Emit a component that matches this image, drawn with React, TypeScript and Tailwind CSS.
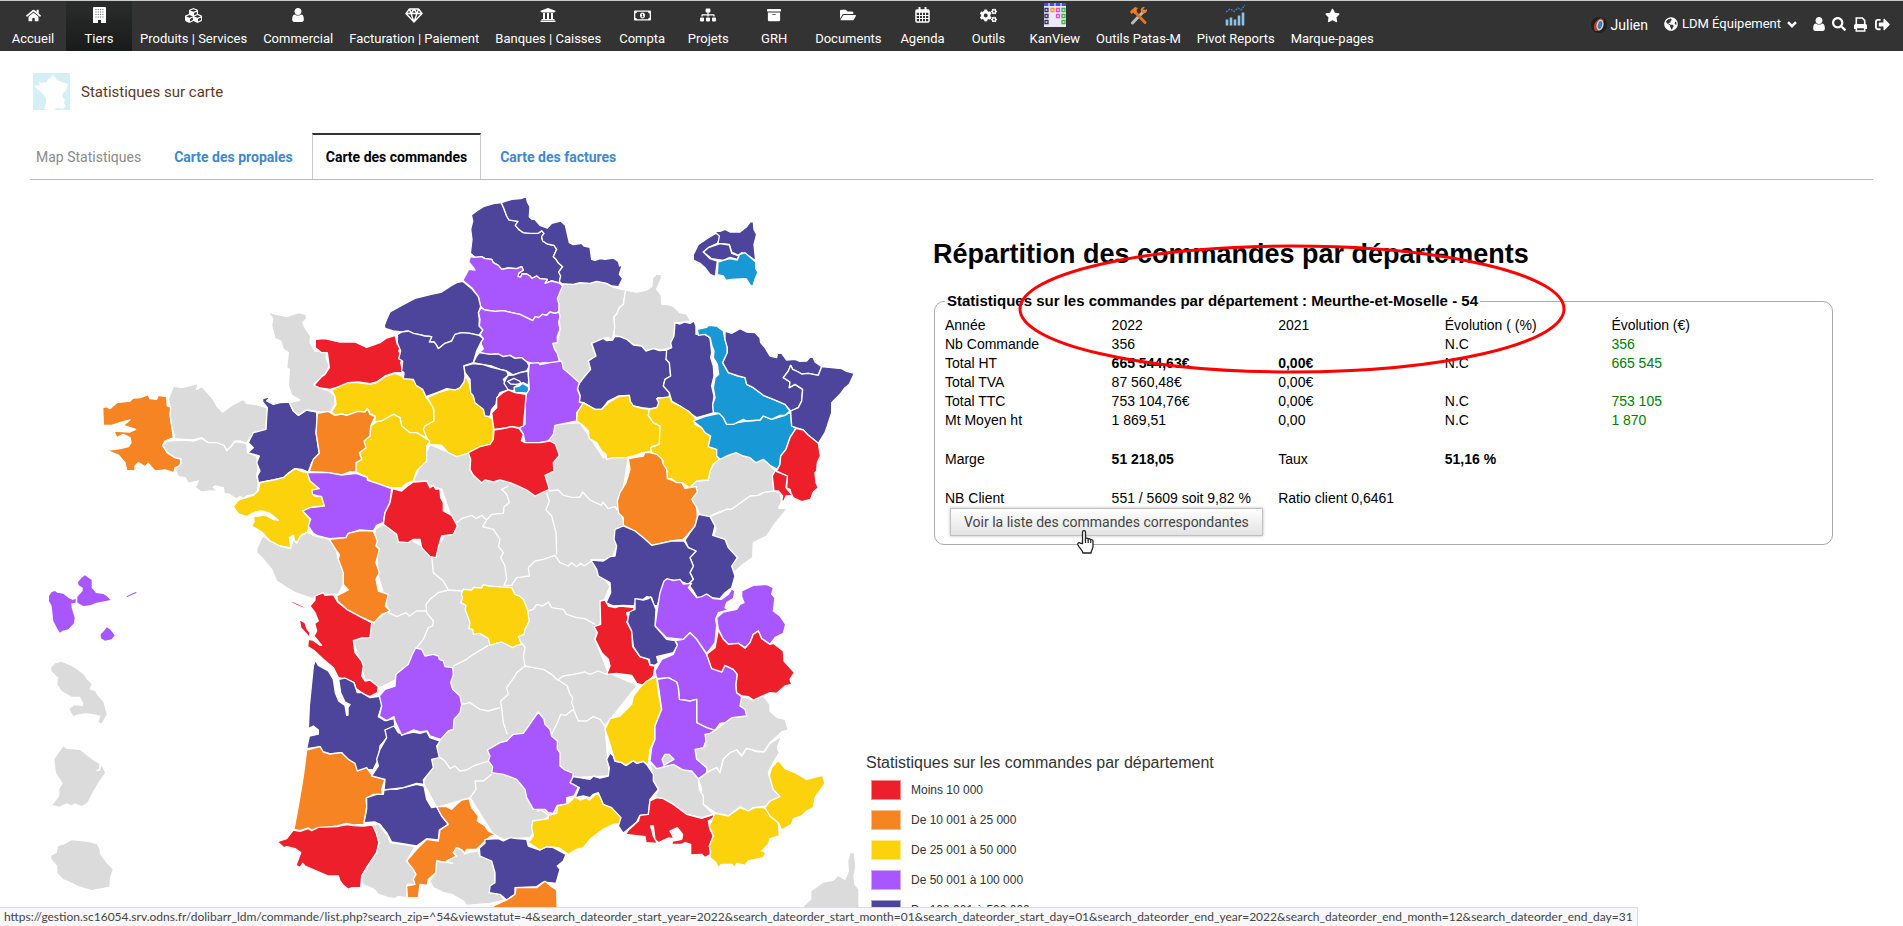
import type { ReactNode } from "react";
import clsx from "clsx";
import {
  FaArchive,
  FaCogs,
  FaCubes,
  FaFolderOpen,
  FaGlobeAmericas,
  FaHome,
  FaRegMoneyBillAlt,
  FaSearch,
  FaSignOutAlt,
  FaSitemap,
  FaStar,
  FaUniversity,
} from "react-icons/fa";

const RED = "#ed1f2b";
const ORANGE = "#f68422";
const YELLOW = "#fcd20c";
const PURPLE = "#a857ff";
const NAVY = "#4c459b";
const BLUE = "#1998d6";
const GRAY = "#dbdbdb";

function BuildingIcon() {
  return (
    <svg width="13" height="16" viewBox="0 0 13 16">
      <path d="M0 1q0-1 1-1h11q1 0 1 1v15H0z" fill="#fff" />
      <path d="M2.500 2.500h8M2.500 5h8M2.500 7.500h8M2.500 10h8" stroke="#555" strokeWidth="1" strokeDasharray="1 1.300" />
      <path d="M5 13h3v3H5z" fill="#222" />
    </svg>
  );
}

function UserIcon({ className }: { className?: string }) {
  return (
    <svg className={className} width="12" height="14" viewBox="0 128 1280 1536" fill="currentColor">
      <path d="M1280 1399q0 109-62.500 187t-150.500 78H213q-88 0-150.500-78T0 1399q0-85 8.500-160.500t31.500-152 58.500-131 94-89T327 832q131 128 313 128t313-128q76 0 134.500 34.500t94 89 58.500 131 31.500 152 8.500 160.500zm-256-887q0 159-112.500 271.500T640 896 368.500 783.500 256 512t112.500-271.500T640 128t271.500 112.500T1024 512z" />
    </svg>
  );
}

function DiamondIcon() {
  return (
    <svg width="18" height="15" viewBox="0 0 18 15" fill="none" stroke="#fff" strokeWidth="1.400" strokeLinejoin="round">
      <path d="M4.500 1h9L17 5.500 9 14 1 5.500zM1 5.500h16M6 5.500 9 14l3-8.500M4.500 1 6 5.500 9 1l3 4.500L13.500 1" />
    </svg>
  );
}

function CalendarIcon() {
  return (
    <svg width="15" height="16" viewBox="0 0 15 16" fill="none" stroke="#fff">
      <rect x="1" y="3" width="13" height="12" rx="1" strokeWidth="1.500" />
      <path d="M1 4.500h13" strokeWidth="2.500" />
      <path d="M4.500 0v4M10.500 0v4" strokeWidth="2" />
      <path d="M1 8.500h13M1 11.500h13M4.500 5v10M7.500 5v10M10.500 5v10" strokeWidth="1" />
    </svg>
  );
}

function PrintIcon() {
  return (
    <svg width="15" height="15" viewBox="0 0 15 15" fill="none" stroke="#fff" strokeWidth="1.600">
      <path d="M3.300 8V1h6l2.400 2.400V8" />
      <path d="M1 12V8.500Q1 7 2.500 7h10Q14 7 14 8.500V12z" fill="#fff" stroke="none" />
      <path d="M3.300 10.500h8.400V14H3.300z" fill="#333" />
    </svg>
  );
}

function KanViewIcon() {
  return (
    <svg width="22" height="24" viewBox="0 0 22 24">
      <rect width="22" height="24" fill="#ece9f4" />
      <path d="M0 0h22v3H0z" fill="#4a4ae0" />
      <path d="M5 0v3M11 0v3M17 0v3" stroke="#fff" strokeWidth="1" />
      <g fill="none" strokeWidth="1.300">
        <path d="M1 5.500h3v3H1zM1 11.500h3v3H1zM1 17.500h3v3H1z" stroke="#333366" />
        <path d="M7 5.500h3v3H7z" stroke="#ef9b3a" />
        <path d="M12.500 5.500h3v3h-3zM12.500 11.500h3v3h-3z" stroke="#e354c4" />
        <path d="M18 5.500h3v3h-3zM18 11.500h3v3h-3zM18 17.500h3v3h-3z" stroke="#3fb54a" />
      </g>
    </svg>
  );
}

function ToolsIcon() {
  return (
    <svg width="19" height="19" viewBox="0 0 19 19" fill="none">
      <path d="M15 5 3.500 17" stroke="#b9bcc0" strokeWidth="3" strokeLinecap="round" />
      <path d="M6 6l10 10.500" stroke="#e2731f" strokeWidth="3" strokeLinecap="round" />
      <path d="M1 5.500 6 1l3 1-1.500 2L8 6 5.500 8 4.500 6.500 2.500 8z" fill="#ef7d22" />
      <path d="M12 5.500c-1-3 1-5 4-4.500l-2 2.300 1.500 1.500L18 3c.6 3-1.500 5-4.500 4.200z" fill="#ef7d22" />
    </svg>
  );
}

function PivotIcon() {
  return (
    <svg width="22" height="22" viewBox="0 0 22 22">
      <path d="M2 21.500v-6M6 21.500v-8M10 21.500v-6M14 21.500v-10M18 21.500v-13" stroke="#8cc3ea" strokeWidth="2.600" />
      <path d="M1 8l4-3 4 2.500L13 4l3 2 4-5" stroke="#3f86c9" strokeWidth="1.200" strokeDasharray="2 1" fill="none" />
    </svg>
  );
}

type MenuItem = { label: string; icon: ReactNode; active?: boolean };

const menu: MenuItem[] = [
  { label: "Accueil", icon: <FaHome size={15} /> },
  { label: "Tiers", icon: <BuildingIcon />, active: true },
  { label: "Produits | Services", icon: <FaCubes size={17} /> },
  { label: "Commercial", icon: <UserIcon /> },
  { label: "Facturation | Paiement", icon: <DiamondIcon /> },
  { label: "Banques | Caisses", icon: <FaUniversity size={16} /> },
  { label: "Compta", icon: <FaRegMoneyBillAlt size={17} /> },
  { label: "Projets", icon: <FaSitemap size={16} /> },
  { label: "GRH", icon: <FaArchive size={14} /> },
  { label: "Documents", icon: <FaFolderOpen size={16} /> },
  { label: "Agenda", icon: <CalendarIcon /> },
  { label: "Outils", icon: <FaCogs size={17} /> },
  { label: "KanView", icon: <KanViewIcon /> },
  { label: "Outils Patas-M", icon: <ToolsIcon /> },
  { label: "Pivot Reports", icon: <PivotIcon /> },
  { label: "Marque-pages", icon: <FaStar size={15} /> },
];

function TopMenu() {
  return (
    <header className="flex h-[51px] items-stretch justify-between border-t border-[#c8cdc8] bg-[#333] text-white">
      <nav className="flex">
        {menu.map((item) => (
          <a
            key={item.label}
            href="#"
            className={clsx(
              "flex min-w-[66px] flex-col items-center px-2 text-[13px] leading-5 whitespace-nowrap",
              item.active && "bg-linear-to-b from-[#2b2d2d] to-[#191b1b]"
            )}
          >
            <span className="flex h-7 items-center">{item.icon}</span>
            {item.label}
          </a>
        ))}
      </nav>
      <div className="flex items-center pr-[13px] pb-[2px] text-[13px]">
        <svg width="16" height="16" viewBox="0 0 16 16" className="mr-1">
          <circle cx="8" cy="8" r="8" fill="#221d20" />
          <path d="M4 14C1 9 4 3 10 1l3 2-5 11z" fill="#a8412d" />
          <ellipse cx="9" cy="8" rx="3.500" ry="5.500" fill="#d9cfc6" transform="rotate(15 9 8)" />
          <ellipse cx="9" cy="8" rx="2" ry="4" fill="#3d7fb5" transform="rotate(15 9 8)" />
        </svg>
        <a href="#" className="mr-4 text-sm">Julien</a>
        <button type="button" className="mr-4 flex items-center pb-[2px]">
          <FaGlobeAmericas size={14} className="mr-1" />
          LDM Équipement
          <svg className="ml-[6px]" width="10" height="7" viewBox="0 0 10 7" fill="none">
            <path d="M1 1.200 5 5.200l4-4" stroke="#fff" strokeWidth="2.400" />
          </svg>
        </button>
        <div className="flex items-center gap-[7px] pb-[2px]">
          <button type="button" aria-label="Utilisateur"><UserIcon /></button>
          <button type="button" aria-label="Rechercher"><FaSearch size={14} /></button>
          <button type="button" aria-label="Imprimer"><PrintIcon /></button>
          <button type="button" aria-label="Déconnexion"><FaSignOutAlt size={15} /></button>
        </div>
      </div>
    </header>
  );
}

const tabs = ["Carte des propales", "Carte des commandes", "Carte des factures"];

function Tabs() {
  return (
    <nav className="flex h-[47px] items-stretch border-b border-[#bbb] text-sm">
      <span className="flex items-center pl-[6px] pr-[14px] pt-[2px] text-[#8a8a8a]">Map Statistiques</span>
      {tabs.map((tab) => {
        const active = tab === "Carte des commandes";
        return (
          <a
            key={tab}
            href="#"
            className={clsx(
              "flex items-center font-bold whitespace-nowrap",
              active
                ? "border-x border-t-2 border-x-[#ccc] border-t-[#333] px-[13px] text-black"
                : "px-[19px] pt-[2px] text-[#4089cc]"
            )}
          >
            {tab}
          </a>
        );
      })}
    </nav>
  );
}

type Zone = [fill: string, d: string];

// Every sheet has its own origin, zones are drawn in the order of the list
const north: Zone[] = [
  [GRAY, "M605 315 640 315 660 310 690 312 710 306 740 312 755 322 776 328 797 332 790 375 778 385 770 405 762 412 764 445 758 480 740 474 730 477 695 492 708 530 685 545 692 570 675 590 658 612 635 592 610 568 598 545 584 510 578 492 592 490 600 450 596 398 592 358Z"],
  [GRAY, "M797 332 830 338 860 332 875 322 878 295 890 284 904 286 904 296 890 330 904 348 905 375 925 376 940 380 960 400 980 404 992 425 960 430 945 430 942 470 935 505 905 512 880 508 858 515 845 500 820 497 800 480 780 472 762 470 764 445 762 412 770 405 778 385 790 375Z"],
  [NAVY, "M424 70 400 73 370 82 350 95 334 107 338 125 332 150 336 180 331 222 345 234 365 232 375 238 395 240 400 250 415 258 425 270 445 266 470 268 485 262 490 272 476 282 474 292 482 293 486 284 500 284 510 290 516 297 530 290 540 298 562 300 555 312 575 305 598 311 602 290 596 278 608 262 596 252 588 240 580 232 590 210 582 198 562 194 548 185 545 172 552 162 545 154 535 162 510 162 490 160 476 150 466 138 474 126 460 124 447 122 440 110 432 88Z"],
  [NAVY, "M424 70 455 60 482 58 499 52 502 68 510 82 508 112 516 120 524 120 540 138 562 146 575 132 602 125 616 138 620 155 628 190 640 196 665 192 672 200 690 204 695 240 705 243 720 238 735 240 760 236 775 246 779 260 787 256 778 285 788 298 776 322 755 320 740 312 710 306 690 312 660 310 640 315 605 313 598 306 602 290 596 278 608 262 596 252 588 240 580 232 590 210 582 198 562 194 548 185 545 172 552 162 545 154 535 162 510 162 490 160 476 150 466 138 474 126 460 124 447 122 440 110 432 88Z"],
  [PURPLE, "M331 232 345 234 365 232 375 238 395 240 400 250 415 258 425 270 445 266 470 268 485 262 490 272 476 282 474 292 482 293 486 284 500 284 510 290 516 297 530 290 540 298 562 300 555 312 575 305 598 311 608 320 600 338 592 358 597 375 596 398 585 402 570 398 560 408 548 405 535 415 526 412 518 424 500 415 480 405 455 400 430 394 405 396 375 392 362 382 355 352 335 325 308 303 318 285 326 270 345 272 340 264 326 248Z"],
  [PURPLE, "M362 386 375 392 405 396 430 394 455 400 480 405 500 415 518 424 526 412 535 415 548 405 560 408 570 398 585 402 596 398 600 410 596 430 600 450 592 470 592 490 578 492 584 510 592 522 598 545 575 552 550 550 525 555 500 547 485 535 465 537 450 528 430 532 415 524 390 525 358 520 370 508 362 490 370 478 360 465 368 452 358 440 360 420 355 400Z"],
  [NAVY, "M308 306 335 328 355 352 362 382 355 400 358 420 357 440 368 452 357 468 330 462 305 460 285 465 275 485 255 492 235 508 228 495 222 488 208 488 215 472 195 470 175 465 160 462 145 455 125 458 100 455 75 447 73 438 80 420 90 398 125 378 165 357 210 346 245 338 275 318 290 310Z"],
  [NAVY, "M112 466 125 458 145 455 160 462 175 465 195 470 215 472 208 488 222 488 228 495 235 508 255 492 275 485 285 465 305 460 330 462 357 468 370 478 362 490 350 515 340 550 312 560 315 590 312 608 300 625 285 632 260 628 235 638 198 652 188 630 168 618 160 600 130 598 132 580 125 575 128 545 116 538 122 515 112 490Z"],
  [NAVY, "M358 520 390 525 415 524 430 532 450 528 465 537 485 535 500 547 508 560 500 575 480 580 460 587 440 575 420 570 395 560 370 556 340 550 350 530Z"],
  [NAVY, "M312 560 340 553 370 556 395 564 420 570 440 575 445 588 430 600 440 620 445 632 420 640 410 660 408 675 395 690 390 712 375 710 370 690 345 670 340 650 332 640 330 600 315 580Z"],
  [NAVY, "M445 588 460 587 480 580 504 575 506 600 505 618 490 610 465 622 462 635 445 632 432 612 438 598Z"],
  [NAVY, "M443 606 462 597 478 605 484 612 468 615 452 614Z"],
  [BLUE, "M462 624 478 620 488 612 505 622 507 642 485 640 465 640Z"],
  [NAVY, "M695 492 730 477 740 484 758 482 764 472 780 472 800 480 820 497 845 500 858 515 880 508 898 514 920 512 924 525 918 540 928 550 932 590 915 600 910 620 928 640 928 655 893 655 902 668 892 685 870 688 845 685 820 680 810 665 808 648 775 650 745 665 725 690 705 690 690 682 670 670 658 668 660 648 652 625 658 612 675 590 692 570 685 545 708 530Z"],
  [NAVY, "M945 430 960 434 975 428 990 432 1002 425 1008 440 1008 465 1030 462 1050 475 1055 520 1052 535 1060 560 1062 590 1055 620 1062 650 1058 680 1062 700 1035 708 1010 715 980 695 960 680 935 665 928 640 910 620 915 600 932 590 928 550 918 540 920 512 935 505 932 490 942 470Z"],
  [NAVY, "M1067 162 1050 172 1035 182 1015 195 1000 225 1000 242 1020 252 1035 265 1050 285 1066 292 1072 245 1050 238 1030 218 1045 205 1072 192 1080 178 1078 165Z"],
  [NAVY, "M1062 155 1080 156 1095 150 1110 158 1140 158 1160 142 1170 128 1180 127 1182 150 1190 165 1182 195 1187 245 1170 232 1145 220 1135 228 1115 218 1108 195 1074 192 1078 170Z"],
  [NAVY, "M1030 218 1045 205 1080 193 1108 197 1115 222 1136 230 1132 240 1110 234 1090 243 1055 238Z"],
  [BLUE, "M1074 248 1090 243 1110 238 1132 242 1138 226 1155 220 1187 248 1187 268 1194 278 1185 300 1178 322 1170 316 1158 298 1115 300 1098 303 1090 290 1072 286Z"],
];

const west: Zone[] = [
  [ORANGE, "M68 355 80 352 90 358 110 340 150 335 160 326 180 325 205 316 210 328 230 330 235 318 260 322 262 350 275 355 270 375 275 410 280 445 255 455 248 468 262 490 285 505 303 510 300 530 285 535 282 550 255 542 225 545 205 522 195 532 175 520 165 530 165 545 140 543 135 520 115 497 80 483 120 478 145 472 153 460 150 445 130 435 110 445 102 425 150 428 167 420 130 408 150 392 120 400 95 408 70 408Z"],
  [GRAY, "M265 330 280 290 305 295 325 290 355 282 350 300 366 292 375 302 400 330 412 352 428 368 460 345 490 330 500 342 530 346 562 355 560 385 558 420 530 430 510 445 500 462 480 455 465 455 450 475 440 482 432 468 400 460 385 460 365 445 340 452 310 450 285 448 275 410 270 375 272 355Z"],
  [GRAY, "M248 468 262 455 310 452 340 455 365 447 385 460 410 460 432 468 440 484 455 470 465 457 500 462 503 490 530 500 535 530 530 560 535 580 532 615 500 620 492 628 480 622 470 630 448 615 432 612 430 595 405 590 400 594 412 606 390 605 365 608 345 595 355 575 325 582 316 566 295 562 285 540 303 525 303 508 285 505 262 490Z"],
  [NAVY, "M548 328 572 322 560 335 580 345 600 340 628 338 640 365 655 378 680 362 710 368 712 400 708 430 718 492 695 520 685 548 665 540 645 538 625 552 610 565 580 572 535 580 532 560 540 545 530 520 538 500 503 490 520 475 505 460 520 430 558 420 560 385 562 355 548 338Z"],
  [GRAY, "M562 65 580 73 620 82 655 70 678 75 680 88 668 100 678 120 692 140 690 160 705 185 740 188 738 205 748 230 735 255 702 285 715 295 750 305 765 322 765 345 750 370 720 368 680 362 655 378 640 365 628 340 660 332 635 318 625 290 628 240 620 235 625 190 610 180 602 155 585 148 575 110 578 88Z"],
  [RED, "M706 150 735 148 780 158 825 158 860 174 900 160 920 146 945 138 952 165 962 175 956 185 968 205 962 220 970 250 945 250 915 260 890 278 870 283 835 278 805 280 790 288 750 300 720 296 702 288 725 262 735 255 748 235 742 190 725 190 706 175Z"],
  [YELLOW, "M755 302 790 286 805 280 835 280 870 285 890 280 915 262 945 252 970 262 1000 272 1010 285 1030 295 1038 325 1060 350 1062 395 1035 410 1038 445 1010 430 990 430 965 410 960 385 940 375 905 395 885 397 885 380 870 372 862 358 855 368 835 366 800 378 785 374 765 378 755 368 768 345 765 322Z"],
  [YELLOW, "M1042 325 1080 308 1115 298 1135 298 1142 275 1152 270 1158 260 1168 285 1175 315 1195 345 1215 360 1216 375 1240 390 1240 450 1235 470 1210 478 1170 490 1150 496 1130 502 1105 490 1085 468 1050 465 1038 440 1030 420 1035 410 1062 395 1062 360Z"],
  [YELLOW, "M890 397 905 395 940 375 960 385 965 410 990 430 1010 430 1050 455 1040 470 1040 515 1010 545 1000 575 980 582 965 595 930 595 900 585 885 582 862 572 862 564 828 548 828 520 845 510 838 490 855 475 850 455 870 440 872 410Z"],
  [ORANGE, "M712 372 745 366 765 378 785 374 800 378 835 366 855 368 862 358 870 375 885 382 872 410 870 440 852 455 858 475 838 490 845 510 828 520 828 548 810 548 785 557 745 550 688 546 700 510 718 492 708 430Z"],
  [YELLOW, "M540 580 580 572 610 565 625 552 645 538 665 546 682 550 690 575 718 598 698 610 705 620 725 622 733 650 690 655 668 665 690 690 690 710 683 725 702 736 680 730 664 736 655 758 644 756 640 738 628 745 632 776 600 770 570 755 545 728 515 710 522 698 520 682 555 677 580 690 595 693 570 672 545 665 525 668 500 682 475 674 460 652 475 632 520 618 535 604Z"],
  [PURPLE, "M682 550 745 550 785 557 828 552 862 564 862 572 900 585 935 598 930 640 915 670 910 700 890 708 880 725 840 722 805 732 798 745 748 748 715 740 700 732 685 710 692 690 668 665 690 655 733 650 725 622 698 616 696 602 718 598 690 575Z"],
  [RED, "M938 598 965 605 985 588 1000 578 1040 575 1050 595 1060 588 1068 600 1080 598 1082 625 1090 640 1090 665 1115 678 1132 710 1120 735 1085 740 1076 770 1068 805 1050 802 1025 775 1020 750 1000 750 985 760 955 758 950 735 910 705 915 670 930 640Z"],
  [GRAY, "M548 740 570 755 600 770 632 778 640 750 650 762 660 742 683 728 700 738 748 750 770 785 775 810 790 850 790 885 775 915 720 915 700 928 680 922 645 910 620 895 590 875 575 840 550 810 530 790 530 778Z"],
  [ORANGE, "M748 750 798 745 805 732 840 724 880 725 892 755 888 770 898 780 888 820 898 850 888 870 895 905 925 915 916 950 930 965 905 975 882 1000 840 982 800 960 773 935 770 920 805 902 790 885 790 850 775 810 778 796 770 785Z"],
];

const east: Zone[] = [
  [GRAY, "M715 450 740 440 768 430 790 440 810 445 828 460 850 450 870 468 885 485 877 500 882 545 850 550 835 558 810 560 780 582 755 600 740 600 700 615 690 622 660 618 650 595 635 570 652 548 648 532 628 537 650 515 685 512 690 485 700 465Z"],
  [GRAY, "M690 622 740 600 755 600 780 582 810 560 835 558 850 550 882 545 900 550 905 575 896 596 922 598 895 630 880 650 860 680 820 700 818 745 790 765 755 795 750 770 772 745 745 715 735 690 700 680 708 660 700 640Z"],
  [PURPLE, "M148 162 175 160 180 166 210 160 245 155 250 178 270 195 298 220 292 240 300 260 298 278 312 282 290 310 290 335 265 340 225 348 220 375 205 395 180 400 135 400 130 375 118 355 135 345 135 300 138 255 148 240 145 195Z"],
  [RED, "M50 265 68 250 85 242 105 250 138 255 135 300 130 350 118 355 95 352 78 356 42 360 38 335 35 310 50 295Z"],
  [RED, "M42 362 78 356 95 352 118 358 130 375 124 394 135 400 180 400 210 395 226 404 238 438 220 460 222 485 195 498 208 540 190 548 165 560 140 542 115 530 90 520 60 512 40 518 15 512 5 520 -20 498 -30 480 -28 450 -35 430 0 412 30 405 40 390Z"],
  [YELLOW, "M310 280 345 300 365 300 385 280 415 262 448 258 450 275 460 290 490 298 508 300 505 318 520 340 540 350 540 380 538 405 515 412 520 425 490 430 460 440 440 445 400 445 380 450 378 435 365 425 350 400 328 388 325 365 305 345 290 335 292 310Z"],
  [YELLOW, "M530 268 555 264 570 262 575 278 600 290 625 305 645 325 645 345 665 355 675 370 692 380 685 412 710 420 718 450 700 465 690 485 685 512 650 515 628 535 605 520 590 520 575 508 562 508 560 480 545 465 550 455 530 435 515 430 512 415 538 405 540 350 520 340 505 318 508 300 530 295 536 280Z"],
  [ORANGE, "M445 448 490 440 495 430 510 430 530 435 545 448 550 465 560 480 562 508 575 512 590 520 605 520 615 537 648 532 652 548 635 570 650 595 652 620 645 650 620 680 610 690 575 695 515 708 490 685 465 665 430 648 430 625 415 610 412 575 420 550 438 520 450 480Z"],
  [NAVY, "M655 615 690 622 705 650 698 678 735 690 745 715 772 745 755 770 765 800 755 835 735 850 720 868 695 865 680 855 655 870 640 845 625 825 640 810 630 790 640 770 630 745 648 725 625 715 615 692 630 670 645 650Z"],
  [NAVY, "M405 660 430 650 465 665 490 685 515 708 575 695 612 695 625 715 648 725 630 745 640 770 630 790 640 810 625 825 600 815 560 810 548 835 532 890 522 888 515 865 500 862 490 870 470 870 462 890 430 888 400 890 378 880 392 850 390 820 355 800 350 780 333 752 370 755 390 742 405 740 410 710 402 690Z"],
  [BLUE, "M640 335 680 320 718 312 730 325 740 345 800 335 840 332 850 320 875 330 915 318 932 308 935 350 948 357 930 385 918 420 902 440 900 465 892 480 870 468 850 450 828 460 810 445 790 440 768 430 740 440 720 450 710 440 710 420 685 412 692 380 675 370 665 355Z"],
  [BLUE, "M652 60 680 54 685 48 710 50 730 65 735 90 742 115 742 130 735 145 728 160 745 190 775 200 795 205 800 225 820 235 850 258 880 270 915 285 930 305 915 318 900 318 875 330 850 320 840 332 800 335 790 330 760 345 740 345 730 325 718 312 700 310 698 285 705 265 700 235 705 205 716 195 712 165 700 145 702 125 696 110 690 85 675 75 655 78Z"],
  [NAVY, "M735 65 755 72 780 58 800 68 825 70 840 85 842 100 855 115 870 140 890 145 892 132 905 132 920 152 945 150 960 156 980 155 990 143 1000 145 1005 158 1025 172 1015 198 985 192 965 194 955 188 938 180 932 168 925 185 910 205 930 218 928 235 945 225 968 240 965 275 955 295 932 305 915 285 880 270 850 258 820 235 800 225 795 205 775 200 745 190 728 160 742 130 742 115 735 90Z"],
  [NAVY, "M1025 172 1055 175 1085 178 1100 186 1123 192 1108 225 1095 235 1080 255 1055 280 1055 310 1042 350 1035 370 1015 402 985 378 970 362 948 355 935 350 932 305 955 295 965 275 968 240 945 225 928 235 930 218 910 205 925 185 932 168 938 180 955 188 965 194 985 192 1015 198Z"],
  [RED, "M948 357 970 362 985 378 1015 402 1021 440 1012 460 1010 485 1005 490 1008 520 1015 535 1000 548 992 570 965 577 945 568 935 560 930 540 920 536 922 500 890 485 900 465 902 440 918 420 930 385Z"],
  [RED, "M885 485 922 500 918 535 937 558 918 560 912 575 905 575 908 560 895 545 882 545 877 500Z"],
];

const southWest: Zone[] = [
  [YELLOW, "M580 90 605 92 612 84 635 86 640 76 655 80 680 82 725 85 735 105 748 110 760 120 772 150 778 185 765 210 762 225 745 232 755 255 740 258 728 265 710 256 695 248 678 252 660 258 655 238 630 222 610 225 608 210 597 208 600 190 585 150 588 138 572 130 578 115 574 105Z"],
  [RED, "M120 140 135 122 135 110 160 100 165 108 190 106 203 128 230 150 270 172 305 190 300 235 275 236 250 244 255 280 275 305 280 320 275 350 285 365 300 362 325 382 322 400 300 412 282 405 258 388 252 370 230 360 205 355 190 325 160 300 130 272 113 262 115 240 128 242 150 258 155 258 132 230 140 215 134 192 145 185 135 160Z"],
  [RED, "M60 128 68 126 85 134 105 143 100 146 80 138Z"],
  [RED, "M88 180 105 190 112 210 120 220 118 235 108 222 92 205Z"],
  [NAVY, "M136 302 145 318 175 335 190 360 196 400 206 425 225 438 230 468 234 468 234 445 240 436 225 428 212 400 206 360 225 356 252 370 262 400 275 400 300 415 335 410 335 440 325 472 345 484 372 478 375 500 345 512 355 530 330 560 325 600 310 630 262 635 235 605 215 580 180 584 160 578 150 562 110 568 118 530 145 524 145 512 130 500 115 508 118 440 125 370 130 320Z"],
  [ORANGE, "M110 572 150 562 160 578 180 584 215 580 235 600 255 612 262 635 290 625 308 650 345 660 335 690 338 710 328 705 310 705 288 718 290 740 282 795 250 797 230 792 200 800 125 812 115 806 90 814 72 810 85 740 100 650Z"],
  [RED, "M70 812 90 816 115 808 125 814 145 804 200 802 230 796 250 799 280 800 305 797 318 800 320 825 327 850 320 880 290 925 275 950 272 985 245 985 235 990 220 978 210 965 205 950 175 950 105 920 98 912 90 925 78 918 92 880 75 868 50 862 42 865 22 847 50 838Z"],
  [GRAY, "M308 798 325 792 345 820 355 830 360 850 400 855 435 862 410 905 435 930 438 945 430 960 435 975 412 975 410 1015 385 1012 375 1018 355 1015 325 1005 312 990 277 975 275 950 290 925 320 880 327 850 320 825Z"],
  [NAVY, "M290 715 320 705 340 705 342 690 380 690 400 685 440 675 462 680 470 720 485 745 500 742 515 770 535 795 508 812 505 842 470 838 440 860 365 848 350 820 330 795 315 788 282 790 290 750Z"],
  [NAVY, "M372 500 385 520 400 525 430 518 450 522 470 516 480 535 510 545 500 560 508 595 485 600 490 625 460 662 462 675 440 672 400 685 342 692 345 660 305 650 325 620 320 600 330 570 350 535 345 512Z"],
  [PURPLE, "M437 266 455 270 465 290 490 285 505 290 508 300 520 305 525 322 548 325 550 345 542 370 548 390 570 410 575 435 570 460 552 480 550 510 535 515 512 540 480 530 472 515 450 518 430 512 395 528 375 485 372 472 350 484 328 470 335 440 328 410 345 390 375 380 378 345 415 315 425 290Z"],
  [ORANGE, "M500 742 530 742 545 750 560 735 575 722 597 718 605 745 625 770 622 785 645 800 655 815 675 825 660 832 640 850 620 870 590 870 585 882 575 872 560 865 550 880 560 890 530 905 548 912 500 905 498 940 475 960 472 978 450 975 445 1015 412 1015 410 980 435 975 430 960 438 945 430 930 410 905 440 870 470 840 505 845 510 812 535 795 515 770Z"],
  [GRAY, "M548 912 500 905 498 940 478 965 490 985 520 1000 545 1005 580 1025 590 1038 660 1032 705 1022 690 1005 658 1000 660 980 675 970 675 940 665 905 630 890 625 875 600 878 585 884 575 872 560 865 550 880 560 890 530 905Z"],
  [NAVY, "M628 866 645 852 645 840 685 838 700 845 720 835 740 838 770 840 775 860 810 872 830 862 850 865 888 885 880 905 862 920 870 930 858 972 820 968 800 982 735 985 735 1005 710 1022 690 1005 658 1000 660 980 675 970 675 940 665 905 630 890Z"],
  [ORANGE, "M670 1040 710 1022 735 1005 738 985 800 985 825 966 842 980 860 992 862 1070 670 1070Z"],
  [PURPLE, "M805 458 822 480 825 495 840 510 845 530 862 545 862 570 870 580 870 620 885 632 910 642 905 668 925 685 912 710 890 715 890 735 862 738 850 762 835 760 825 750 790 750 770 715 765 690 740 660 700 645 665 640 668 622 655 605 660 590 652 572 690 550 710 545 730 525 760 522Z"],
  [YELLOW, "M788 785 835 778 835 768 860 762 862 740 895 732 915 712 930 722 950 715 958 722 980 702 990 710 1000 735 1025 745 1053 775 1053 793 1030 795 1000 810 960 840 940 865 920 870 895 885 865 865 830 862 810 872 775 850 790 830 785 805Z"],
];

const southEast: Zone[] = [
  [GRAY, "M603 410 625 418 640 422 670 410 690 435 690 455 712 475 735 480 745 512 725 518 690 550 672 578 650 575 620 567 605 588 590 572 570 580 550 600 545 620 540 640 530 625 500 640 500 625 470 600 465 570 495 560 495 525 525 513 575 475 620 470 600 440Z"],
  [GRAY, "M550 600 570 580 590 572 605 590 620 567 650 577 672 578 690 552 725 530 712 565 718 580 700 610 685 640 700 690 722 712 680 740 640 745 625 755 600 742 565 770 525 760 490 735 480 710 485 690 475 660 500 640 530 625 540 640Z"],
  [GRAY, "M330 608 350 628 400 615 430 632 455 635 475 658 478 690 490 710 490 735 520 765 485 775 440 765 395 730 345 712 355 690 340 665Z"],
  [NAVY, "M210 580 220 590 225 605 245 610 258 618 280 604 290 612 310 606 322 618 340 645 340 665 355 690 330 720 325 765 300 768 290 788 250 822 235 800 243 775 215 745 190 735 175 700 160 705 150 715 130 710 105 715 118 685 90 670 100 652 150 660 160 650 180 656 205 650 208 625 200 600Z"],
  [PURPLE, "M372 65 382 58 400 64 420 60 430 74 455 72 445 85 470 115 485 112 500 104 520 118 545 120 565 105 575 88 585 95 580 118 560 130 555 145 565 152 535 160 527 180 530 200 525 250 500 283 470 240 450 220 430 240 380 235 345 200 352 150 360 100Z"],
  [PURPLE, "M605 95 640 78 680 75 700 85 695 105 705 115 700 155 720 170 737 195 730 222 705 235 690 255 665 238 655 215 640 225 630 250 615 265 595 252 565 255 550 240 535 210 530 175 550 158 590 150 600 135 612 130 605 112Z"],
  [PURPLE, "M450 220 470 240 500 285 515 325 530 328 545 338 555 318 580 330 592 345 588 375 590 400 605 412 600 440 615 450 620 470 575 475 555 490 540 492 525 513 500 505 470 490 470 420 450 425 418 420 415 385 410 368 385 355 350 358 345 335 365 300 400 285 412 255 405 244 430 240Z"],
  [RED, "M535 212 550 240 565 255 595 252 615 267 630 250 640 225 655 215 665 238 690 255 700 252 730 275 732 305 763 340 750 360 755 375 735 380 710 402 690 400 640 422 625 412 605 410 590 400 588 375 592 345 580 330 555 318 545 338 515 328 500 285 525 265Z"],
  [RED, "M180 125 195 122 205 140 225 145 240 140 285 145 275 158 260 160 265 180 260 188 275 215 278 262 300 292 325 300 330 318 345 320 340 350 310 378 290 372 275 348 230 342 200 345 210 320 205 300 185 280 165 240 172 220 162 202 182 195Z"],
  [NAVY, "M285 118 310 122 325 118 332 112 348 150 345 200 380 240 405 244 412 258 400 280 350 292 355 310 345 318 330 315 328 300 300 292 280 262 275 215 262 188 268 158 285 150Z"],
  [YELLOW, "M350 352 355 400 365 450 345 500 345 540 330 570 325 618 310 606 290 612 280 604 258 618 245 610 225 605 210 555 195 510 210 478 240 470 275 435 280 410 300 385 320 365Z"],
  [PURPLE, "M352 360 385 355 410 368 415 385 418 420 450 425 470 420 470 490 500 505 525 513 510 522 495 525 498 545 490 565 465 570 470 600 500 625 500 640 475 658 455 635 430 632 400 615 350 628 330 605 335 565 345 540 345 500 365 450 358 400Z"],
  [GRAY, "M366 600 375 585 388 585 402 600 385 610 372 618Z"],
  [RED, "M330 725 350 715 370 718 395 732 440 765 485 777 522 765 522 775 505 785 510 810 520 830 508 860 512 885 495 895 485 885 452 887 452 855 435 850 425 855 395 855 398 845 425 840 428 825 412 805 390 815 402 838 385 836 355 850 345 840 340 800 332 800 340 830 352 852 318 850 315 832 257 825 265 812 295 785 300 768 325 765Z"],
  [YELLOW, "M525 762 565 770 600 745 625 755 645 745 670 745 680 750 690 770 715 790 718 830 690 838 685 855 665 875 678 880 670 895 625 905 615 918 590 912 585 925 575 915 545 915 535 925 528 910 510 895 512 875 508 860 520 830 508 800Z"],
  [YELLOW, "M715 603 735 628 765 640 800 660 848 648 855 672 825 715 820 745 800 755 785 770 760 778 755 795 725 812 715 790 690 770 675 745 690 725 720 712 700 690 688 650 695 625Z"],
  [GRAY, "M930 880 943 880 948 920 942 950 945 975 957 990 957 1070 800 1070 790 1040 812 1020 812 995 850 968 880 962 895 948 915 960 925 935 923 905Z"],
];

const overseas: Zone[] = [
  [PURPLE, "M147 110 155 98 165 95 172 100 190 103 205 115 218 122 227 118 227 130 214 132 215 145 224 175 222 192 205 210 188 214 180 220 172 208 160 185 155 140 147 125Z"],
  [PURPLE, "M234 68 245 55 255 48 275 62 275 85 288 101 310 104 320 110 332 122 290 130 270 138 250 140 232 130 232 112 248 95 248 85 236 78Z"],
  [PURPLE, "M380 111 395 103 409 97 409 101 395 107 382 113Z"],
  [PURPLE, "M302 225 312 215 320 204 330 210 344 228 335 240 315 244 303 237Z"],
  [GRAY, "M153 325 165 312 185 308 210 318 230 330 250 345 262 362 275 375 268 390 285 395 292 408 310 428 320 465 305 492 295 488 302 470 280 464 255 462 235 465 220 470 208 450 222 438 248 440 250 432 240 412 215 412 185 395 172 375 175 355 155 336Z"],
  [GRAY, "M163 600 178 578 190 561 200 568 240 572 262 590 282 604 298 614 298 628 285 635 300 634 305 618 315 640 296 668 280 695 262 730 245 740 225 732 215 738 200 732 178 742 158 737 178 710 178 690 188 672 168 640Z"],
  [GRAY, "M153 890 170 880 175 860 190 856 215 843 265 848 290 855 298 868 300 885 320 912 338 930 330 955 328 982 275 992 235 980 205 965 190 960 172 940 172 920 155 900Z"],
];

// Departments of the centre share one background, only their limits are drawn
const centre =
  "M1290 1335 1370 1370 1410 1360 1560 1440 1665 1275 1740 1270 1810 1375 1885 1375 1860 1530 1875 1580 1835 1680 1773 1682 1830 1760 1810 1810 1800 1875 1785 1920 1825 2020 1912 2058 1815 2180 1828 2330 1715 2335 1690 2445 1645 2452 1625 2465 1590 2515 1510 2520 1480 2505 1410 2395 1310 2425 1270 2350 1320 2220 1360 2080 1250 2010 1140 2065 1095 2040 1060 1925 1115 1870 1165 1835 1135 1730 1125 1590 1150 1575 1300 1660 1360 1570 1325 1470 1240 1445Z";

const limitsEast =
  "M-70 640-55 628-25 618-12 628 5 618 20 632 35 615 70 612 72 592 88 580 80 555 65 540 85 530M20 632 8 652 40 660 60 690 55 710 70 730 62 745 75 770 80 810 72 828 95 828 110 805 148 800 145 775 165 755 190 750 225 738M200 550 208 575 198 602 215 620 228 670 230 735M225 738 240 760 265 770 275 760 290 772 302 762 312 770 335 755M205 545 235 542 250 558 280 565 300 563 308 548 330 572 365 588 368 578 385 598 405 592 412 602";

const limitsSouthWest =
  "M485-10 490 40 520 65 535 92 505 100 480 120 468 135 470 160 490 185 488 200 475 205 460 240 440 265M535 92 580 95M355 160 380 172 408 160 418 170 440 155 470 155M550 320 590 300 610 285 655 258M755 250 765 265 760 290 765 320 740 340 735 350 710 385 715 405 692 425 695 445 700 490 712 525M575 435 600 430 630 450 655 455 690 445M510 595 525 605 540 628 555 620 570 635 590 632 610 620 640 610 660 605M490 742 520 742M600 715 618 690 615 665 640 665 665 645M775 155 790 150 800 135 818 140 835 128 845 145 880 150 890 165 920 175 945 178 975 195M765 320 790 325 820 330 845 345 862 362 880 350 910 345 945 338 960 345 985 335 1010 345M865 362 892 380 900 405 908 415 905 430 912 448M845 525 862 490 872 465 888 468 910 450 925 485 950 485 970 472 990 480 1005 500M835 768 815 752 800 755";

function Sheet({ x, y, zones }: { x: number; y: number; zones: Zone[] }) {
  return (
    <g transform={`translate(${x} ${y})`}>
      {zones.map(([fill, d]) => (
        <path key={d} d={d} fill={fill} />
      ))}
    </g>
  );
}

function DepartmentMap() {
  return (
    <svg
      className="h-[746px] w-[836px] shrink-0"
      viewBox="90 542 2508 2238"
      stroke="#fff"
      strokeWidth="4"
      strokeLinejoin="round"
      role="img"
      aria-label="Carte des départements"
    >
      <path d={centre} fill={GRAY} />
      <g fill="none">
        <path d={limitsEast} transform="translate(1440 930)" />
        <path d={limitsSouthWest} transform="translate(810 1680)" />
      </g>
      <Sheet x={240} y={870} zones={west} />
      <Sheet x={1080} y={540} zones={north} />
      <Sheet x={1440} y={930} zones={east} />
      <Sheet x={810} y={1680} zones={southWest} />
      <Sheet x={1620} y={1680} zones={southEast} />
      <g strokeWidth="0">
        <Sheet x={0} y={1680} zones={overseas} />
      </g>
    </svg>
  );
}

type Row = { cells: string[]; bold?: boolean };

const rows: Row[] = [
  { cells: ["Nb Commande", "356", "", "N.C", "356"] },
  { cells: ["Total HT", "665 544,63€", "0,00€", "N.C", "665 545"], bold: true },
  { cells: ["Total TVA", "87 560,48€", "0,00€", "", ""] },
  { cells: ["Total TTC", "753 104,76€", "0,00€", "N.C", "753 105"] },
  { cells: ["Mt Moyen ht", "1 869,51", "0,00", "N.C", "1 870"] },
];

function StatsPanel() {
  return (
    <section className="relative ml-[67px] mr-10 font-['Liberation_Sans',Arial,sans-serif] text-sm text-black">
      <h1 className="pt-14 text-[27px] leading-9 font-bold whitespace-nowrap">
        Répartition des commandes par départements
      </h1>
      <fieldset className="mt-5 ml-px rounded-[10px] border border-[#aaa] px-[10px] pb-2">
        <legend className="px-[2px] text-[15px] leading-[18px] font-bold">
          Statistiques sur les commandes par département : Meurthe-et-Moselle - 54
        </legend>
        <table className="mt-[6px] w-[833px] table-fixed text-left leading-[19px] whitespace-nowrap">
          <thead>
            <tr>
              {["Année", "2022", "2021", "Évolution ( (%)", "Évolution (€)"].map((head) => (
                <th key={head} className="p-0 font-normal">{head}</th>
              ))}
            </tr>
          </thead>
          <tbody>
            {rows.map(({ cells, bold }) => (
              <tr key={cells[0]} className="h-[19px]">
                <td>{cells[0]}</td>
                <td className={clsx(bold && "font-bold")}>{cells[1]}</td>
                <td className={clsx(bold && "font-bold")}>{cells[2]}</td>
                <td>{cells[3]}</td>
                <td className="text-[#008000]">{cells[4]}</td>
              </tr>
            ))}
            <tr className="h-5"><td colSpan={5} /></tr>
            <tr>
              <td>Marge</td>
              <td className="font-bold">51 218,05</td>
              <td>Taux</td>
              <td className="font-bold">51,16 %</td>
              <td />
            </tr>
            <tr className="h-5"><td colSpan={5} /></tr>
            <tr>
              <td>NB Client</td>
              <td>551 / 5609 soit 9,82 %</td>
              <td colSpan={3}>Ratio client 0,6461</td>
            </tr>
          </tbody>
        </table>
        <button
          type="button"
          className="relative ml-[5px] h-7 cursor-pointer border border-[#c0c0c0] bg-linear-to-b from-white to-[#e3e3e3] px-[13px] font-[Roboto,sans-serif] text-sm text-[#444] shadow-[0_0_3px_#bbb]"
        >
          Voir la liste des commandes correspondantes
          <svg className="absolute top-5 left-[124px]" width="20" height="26" viewBox="0 0 20 26">
            <path
              d="M7.500 14.500V3.500c0-2.400 3-2.400 3 0v6.200c.6-1 2.500-.8 2.700.5.7-.8 2.300-.5 2.500.7.800-.6 2.300-.2 2.300 1.300V17c0 3-1.500 4-2 7h-8c-.5-3-3.500-4.500-5-8-.8-2 1-3 2.500-1.700z"
              fill="#fff"
              stroke="#222"
              strokeWidth="1.300"
            />
            <path d="M10.500 9.500V14M13.200 10.500V14M15.700 11.500V14" stroke="#222" strokeWidth="1.200" />
          </svg>
        </button>
      </fieldset>
      <svg className="pointer-events-none absolute top-[63px] left-[83px]" width="552" height="132">
        <ellipse cx="276" cy="66" rx="272" ry="63" fill="none" stroke="#fe0000" strokeWidth="3" />
      </svg>
    </section>
  );
}

const scale = [
  { label: "Moins 10 000", color: RED },
  { label: "De 10 001 à 25 000", color: ORANGE },
  { label: "De 25 001 à 50 000", color: YELLOW },
  { label: "De 50 001 à 100 000", color: PURPLE },
  { label: "De 100 001 à 500 000", color: NAVY },
];

function MapLegend() {
  return (
    <section className="mt-[206px] font-['Liberation_Sans',Arial,sans-serif] text-[#333]">
      <h2 className="text-base">Statistiques sur les commandes par département</h2>
      <ul className="ml-[5px] text-[12px]">
        {scale.map(({ label, color }) => (
          <li key={label} className="flex h-[30px] items-center gap-[10px]">
            <span className="h-5 w-[30px] border border-white/50" style={{ backgroundColor: color }} />
            {label}
          </li>
        ))}
      </ul>
    </section>
  );
}

export default function App() {
  return (
    <div className="h-screen overflow-hidden bg-white font-[Roboto,sans-serif]">
      <TopMenu />
      <main className="mx-[30px]">
        <div className="flex items-center gap-[11px] pt-[22px] pb-[23px] pl-[3px]">
          <svg width="37" height="37" viewBox="0 0 37 37">
            <rect width="37" height="37" rx="1" fill="#d5eff7" />
            <path
              d="M1 13l5-1 1 1-1-4 3 1 5-1 1-3 3-1 1-3 2 1 3 4 5 2 6 2-2 6-4 5 1 3 2 1-1 4 2 3-3 3-5-1-3 1v3l-4-1-7-2 2-5v-6l-3-4z"
              fill="#fff"
            />
          </svg>
          <h1 className="pt-[2px] text-[15px] text-[#60381c]">Statistiques sur carte</h1>
        </div>
        <Tabs />
        <div className="flex">
          <DepartmentMap />
          <div className="min-w-0 flex-1">
            <StatsPanel />
            <MapLegend />
          </div>
        </div>
      </main>
      <footer className="fixed bottom-0 left-0 h-[19px] border-t border-r border-[#ddd] bg-[#f8f8fb] px-1 font-[Lato,sans-serif] text-[12px] leading-[18px] whitespace-nowrap text-[#444]">
        https://gestion.sc16054.srv.odns.fr/dolibarr_ldm/commande/list.php?search_zip=^54&amp;viewstatut=-4&amp;search_dateorder_start_year=2022&amp;search_dateorder_start_month=01&amp;search_dateorder_start_day=01&amp;search_dateorder_end_year=2022&amp;search_dateorder_end_month=12&amp;search_dateorder_end_day=31
      </footer>
    </div>
  );
}
